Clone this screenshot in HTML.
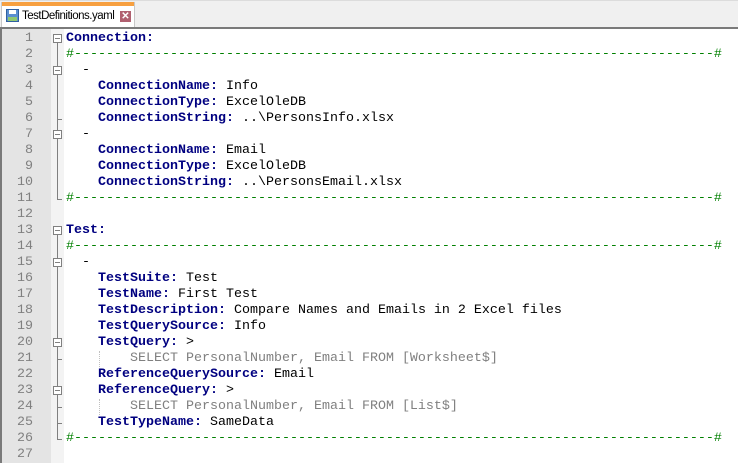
<!DOCTYPE html>
<html><head><style>
body{margin:0;width:738px;height:463px;overflow:hidden;background:#fff;font-family:"Liberation Sans",sans-serif;position:relative}
#bar{position:absolute;left:0;top:0;width:738px;height:27px;background:#f0f0f0;border-top:1px solid #dcdcdc}
#line{position:absolute;left:0;top:27px;width:738px;height:2px;background:#7a7a7a}
#tab{position:absolute;left:1px;top:2px;width:134px;height:25px;background:#fff;border-left:1px solid #c8c8c8;border-right:1px solid #c8c8c8;box-sizing:border-box}
#tab .or{position:absolute;left:0;top:0;right:0;height:4px;background:#f7a040}
#tab .t{position:absolute;left:20px;top:8px;font-size:11.5px;color:#000;letter-spacing:-0.5px;white-space:nowrap}
#tab .x{position:absolute;left:118px;top:9px;width:11px;height:11px;background:#b06070;color:#fff;font-size:10px;line-height:11px;text-align:center;font-weight:bold}
#left{position:absolute;left:0;top:29px;width:2px;height:434px;background:#7a7a7a}
#nums{position:absolute;left:2px;top:29px;width:49px;height:434px;background:#e4e4e4}
#fold{position:absolute;left:51px;top:29px;width:13px;height:434px;background:#f3f3f3}
.n{position:absolute;left:2px;width:31px;text-align:right;font-family:"Liberation Mono",monospace;font-size:13.33px;color:#808080;height:16px;line-height:16px}
.c{position:absolute;left:66px;font-family:"Liberation Mono",monospace;font-size:13.33px;white-space:pre;height:16px;line-height:16px;color:#000}
.k{color:#000080;font-weight:bold}
.g{color:#008000}
.s{color:#808080}
.fb{position:absolute;left:53px;width:7px;height:7px;border:1px solid #808080;background:#fff}
.fb:after{content:"";position:absolute;left:1px;top:3px;width:5px;height:1px;background:#808080}
.vl{position:absolute;left:57px;width:1px;background:#808080}
.tk{position:absolute;left:57px;width:5px;height:1px;background:#808080}
</style></head><body>
<div id="bar"></div>
<div id="tab"><div class="or"></div>
<svg style="position:absolute;left:4px;top:7px" width="13" height="13"><rect x="0.5" y="0.5" width="12" height="12" fill="#5a8fd0" stroke="#3060a0"/><rect x="3" y="1" width="7" height="4" fill="#fff"/><rect x="2" y="8" width="9" height="4" fill="#90c870"/></svg>
<div class="t">TestDefinitions.yaml</div><div class="x">✕</div></div>
<div id="line"></div>
<div id="left"></div><div id="nums"></div><div id="fold"></div>
<div id="c"></div>
<script>
var D='#'+'-'.repeat(80)+'#';
var L=[
'<span class="k">Connection:</span>',
'<span class="g">'+D+'</span>',
'  -',
'    <span class="k">ConnectionName:</span> Info',
'    <span class="k">ConnectionType:</span> ExcelOleDB',
'    <span class="k">ConnectionString:</span> ..\\PersonsInfo.xlsx',
'  -',
'    <span class="k">ConnectionName:</span> Email',
'    <span class="k">ConnectionType:</span> ExcelOleDB',
'    <span class="k">ConnectionString:</span> ..\\PersonsEmail.xlsx',
'<span class="g">'+D+'</span>',
'',
'<span class="k">Test:</span>',
'<span class="g">'+D+'</span>',
'  -',
'    <span class="k">TestSuite:</span> Test',
'    <span class="k">TestName:</span> First Test',
'    <span class="k">TestDescription:</span> Compare Names and Emails in 2 Excel files',
'    <span class="k">TestQuerySource:</span> Info',
'    <span class="k">TestQuery:</span> >',
'        <span class="s">SELECT PersonalNumber, Email FROM [Worksheet$]</span>',
'    <span class="k">ReferenceQuerySource:</span> Email',
'    <span class="k">ReferenceQuery:</span> >',
'        <span class="s">SELECT PersonalNumber, Email FROM [List$]</span>',
'    <span class="k">TestTypeName:</span> SameData',
'<span class="g">'+D+'</span>',
''];
var h='';
for(var i=0;i<L.length;i++){var y=31+i*16;
h+='<div class="n" style="top:'+y+'px">'+(i+1)+'</div><div class="c" style="top:'+y+'px">'+L[i]+'</div>';}
function T(i){return 31+(i-1)*16;}
h+='<div class="vl" style="top:'+(T(1)+12)+'px;height:'+(T(11)+8-T(1)-12)+'px"></div>';
h+='<div class="tk" style="top:'+(T(11)+8)+'px"></div>';
h+='<div class="tk" style="top:'+(T(6)+8)+'px"></div>';
h+='<div class="vl" style="top:'+(T(13)+12)+'px;height:'+(T(26)+8-T(13)-12)+'px"></div>';
h+='<div class="tk" style="top:'+(T(26)+8)+'px"></div>';
h+='<div class="tk" style="top:'+(T(21)+8)+'px"></div>';
h+='<div class="tk" style="top:'+(T(24)+8)+'px"></div>';
h+='<div class="tk" style="top:'+(T(25)+8)+'px"></div>';
[1,3,7,13,15,20,23].forEach(function(i){h+='<div class="fb" style="top:'+(T(i)+3)+'px"></div>';});
h+='<div style="position:absolute;left:99px;top:'+T(21)+'px;height:16px;border-left:1px dotted #c0c0c0"></div>';
h+='<div style="position:absolute;left:99px;top:'+T(24)+'px;height:16px;border-left:1px dotted #c0c0c0"></div>';
document.getElementById('c').innerHTML=h;
</script>
</body></html>
